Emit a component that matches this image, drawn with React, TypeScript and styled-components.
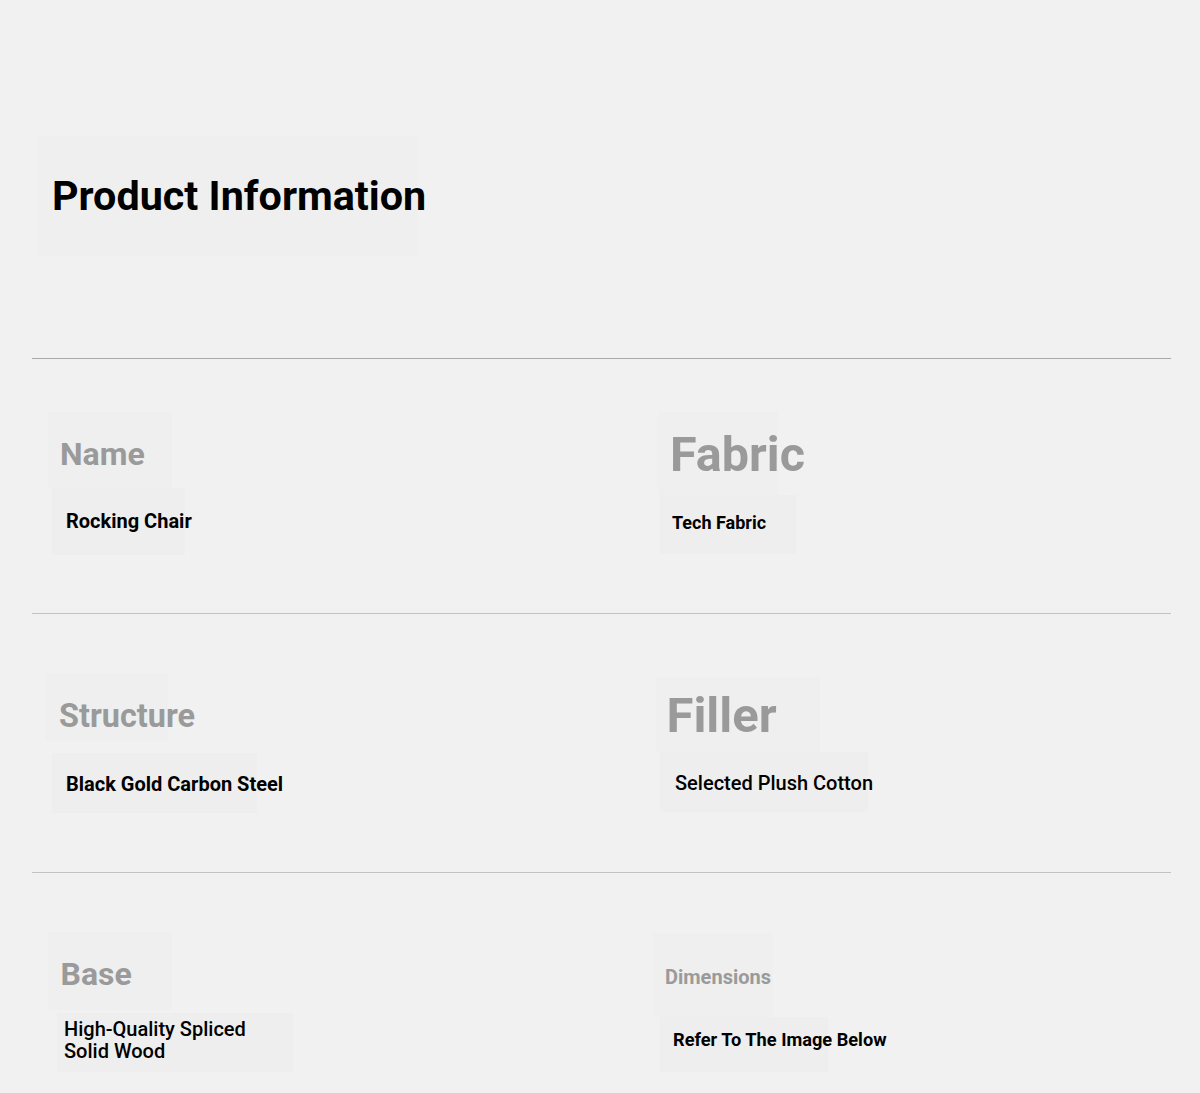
import React from "react";
import styled, { createGlobalStyle } from "styled-components";

const GlobalStyle = createGlobalStyle`
  html, body {
    margin: 0;
    padding: 0;
    background: #f1f1f1;
  }
  body {
    font-family: Roboto, "Liberation Sans", Arial, sans-serif;
    min-height: 100vh;
  }
  * { box-sizing: border-box; }
`;

const Page = styled.div`
  padding: 136px 29px 20px 32px;
  min-height: 1093px;
`;

const TitleBox = styled.div`
  width: 381px;
  height: 120px;
  margin-left: 5px;
  padding-left: 15px;
  display: flex;
  align-items: center;
  background: #efefef;
  white-space: nowrap;
`;

const Title = styled.h1`
  margin: 0;
  font-size: 41.3px;
  line-height: 1.2;
  font-weight: 700;
  color: #000;
  transform: translateY(1px);
`;

const Divider = styled.hr<{ $tone: string; $top?: number }>`
  margin: ${(p) => p.$top ?? 0}px 0 0 0;
  border: none;
  height: 1px;
  background: ${(p) => p.$tone};
`;

const Row = styled.div<{ $pb: number }>`
  display: grid;
  grid-template-columns: 610px 1fr;
  align-items: start;
  padding-bottom: ${(p) => p.$pb}px;
`;

const Cell = styled.div<{ $top: number }>`
  display: flex;
  flex-direction: column;
  align-items: flex-start;
  margin-top: ${(p) => p.$top}px;
`;

type BoxSpec = { x: number; w: number; pt: number; pb: number; pl: number; mt?: number };

const LabelBox = styled.div<{ $b: BoxSpec }>`
  margin-left: ${(p) => p.$b.x}px;
  margin-top: ${(p) => p.$b.mt ?? 0}px;
  width: ${(p) => p.$b.w}px;
  padding: ${(p) => `${p.$b.pt}px 0 ${p.$b.pb}px ${p.$b.pl}px`};
  background: #efefef;
  white-space: nowrap;
`;

const Label = styled.h3<{ $size: number }>`
  margin: 0;
  font-size: ${(p) => p.$size}px;
  line-height: 1.2;
  font-weight: 700;
  color: #9a9a9a;
`;

const ValueBox = styled.div<{ $b: BoxSpec }>`
  margin-left: ${(p) => p.$b.x}px;
  margin-top: ${(p) => p.$b.mt ?? 0}px;
  width: ${(p) => p.$b.w}px;
  padding: ${(p) => `${p.$b.pt}px 0 ${p.$b.pb}px ${p.$b.pl}px`};
  background: #eeeeee;
`;

const Value = styled.p<{ $size: number; $weight: number; $lh: number; $max?: number }>`
  margin: 0;
  font-size: ${(p) => p.$size}px;
  line-height: ${(p) => p.$lh}px;
  font-weight: ${(p) => p.$weight};
  color: #000;
  white-space: ${(p) => (p.$max ? "normal" : "nowrap")};
  max-width: ${(p) => (p.$max ? `${p.$max}px` : "none")};
`;

type Spec = {
  label: string;
  value: string;
  top: number;
  labelSize: number;
  valueSize: number;
  valueWeight: number;
  valueLh: number;
  valueMax?: number;
  lb: BoxSpec;
  vb: BoxSpec;
};

const rows: { pb: number; divider: string; cells: Spec[] }[] = [
  {
    pb: 58,
    divider: "#c2c2c2",
    cells: [
      {
        label: "Name",
        value: "Rocking Chair",
        top: 53,
        labelSize: 32,
        valueSize: 20,
        valueWeight: 700,
        valueLh: 24,
        lb: { x: 16, w: 124, pt: 23, pb: 14.8, pl: 12 },
        vb: { x: 20, w: 133, pt: 21, pb: 22, pl: 14 },
      },
      {
        label: "Fabric",
        value: "Tech Fabric",
        top: 53,
        labelSize: 48.5,
        valueSize: 18,
        valueWeight: 700,
        valueLh: 21.6,
        lb: { x: 16, w: 120, pt: 13.8, pb: 10.6, pl: 12 },
        vb: { x: 18, w: 136, pt: 17, pb: 21, pl: 12 },
      },
    ],
  },
  {
    pb: 59.6,
    divider: "#c2c2c2",
    cells: [
      {
        label: "Structure",
        value: "Black Gold Carbon Steel",
        top: 59,
        labelSize: 32.4,
        valueSize: 20,
        valueWeight: 700,
        valueLh: 24,
        lb: { x: 13, w: 123, pt: 24, pb: 4.6, pl: 14 },
        vb: { x: 20, w: 205, pt: 19, pb: 17, pl: 14, mt: 12 },
      },
      {
        label: "Filler",
        value: "Selected Plush Cotton",
        top: 63,
        labelSize: 49,
        valueSize: 20,
        valueWeight: 500,
        valueLh: 24,
        lb: { x: 14, w: 164, pt: 9.7, pb: 6.5, pl: 10.5 },
        vb: { x: 18, w: 208, pt: 19, pb: 17, pl: 15 },
      },
    ],
  },
  {
    pb: 20,
    divider: "",
    cells: [
      {
        label: "Base",
        value: "High-Quality Spliced Solid Wood",
        top: 59,
        labelSize: 32,
        valueSize: 20,
        valueWeight: 500,
        valueLh: 22,
        valueMax: 200,
        lb: { x: 16, w: 124, pt: 22.7, pb: 17.1, pl: 12.5 },
        vb: { x: 25, w: 236, pt: 4.5, pb: 10.5, pl: 7, mt: 3 },
      },
      {
        label: "Dimensions",
        value: "Refer To The Image Below",
        top: 60,
        labelSize: 20,
        valueSize: 18.2,
        valueWeight: 700,
        valueLh: 21.6,
        lb: { x: 11, w: 120, pt: 31.4, pb: 28.3, pl: 12 },
        vb: { x: 18, w: 168, pt: 12.2, pb: 21, pl: 13 },
      },
    ],
  },
];

export default function App() {
  return (
    <>
      <GlobalStyle />
      <Page>
        <TitleBox>
          <Title>Product Information</Title>
        </TitleBox>
        <Divider $tone="#a9a9a9" $top={102} />
        {rows.map((row, i) => (
          <React.Fragment key={i}>
            <Row $pb={row.pb}>
              {row.cells.map((c) => (
                <Cell key={c.label} $top={c.top}>
                  <LabelBox $b={c.lb}>
                    <Label $size={c.labelSize}>{c.label}</Label>
                  </LabelBox>
                  <ValueBox $b={c.vb}>
                    <Value
                      $size={c.valueSize}
                      $weight={c.valueWeight}
                      $lh={c.valueLh}
                      $max={c.valueMax}
                    >
                      {c.value}
                    </Value>
                  </ValueBox>
                </Cell>
              ))}
            </Row>
            {row.divider && <Divider $tone={row.divider} />}
          </React.Fragment>
        ))}
      </Page>
    </>
  );
}
